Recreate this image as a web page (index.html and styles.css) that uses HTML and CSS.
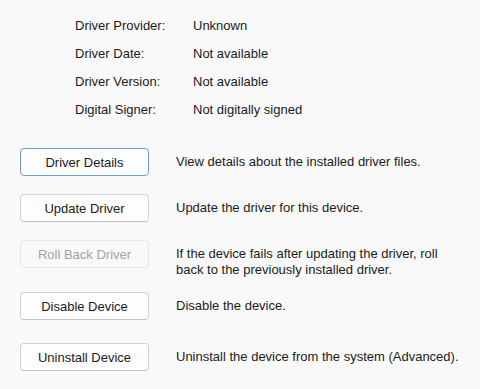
FILE: index.html
```html
<!DOCTYPE html>
<html>
<head>
    <title>Driver</title>
    <link rel="stylesheet" href="styles.css">
</head>
<body>
    <div class="container">
        <div class="info">
            <div class="etiqueta">Driver Provider:</div>
            <div class="valor">Unknown</div>
            <div class="etiqueta">Driver Date:</div>
            <div class="valor">Not available</div>
            <div class="etiqueta">Driver Version:</div>
            <div class="valor">Not available</div>
            <div class="etiqueta">Digital Signer:</div>
            <div class="valor">Not digitally signed</div>
        </div>

        <div class="acciones">
            <div class="fila">
                <button class="btn btnFoco">Driver Details</button>
                <div class="desc">View details about the installed driver files.</div>
            </div>
            <div class="fila">
                <button class="btn">Update Driver</button>
                <div class="desc">Update the driver for this device.</div>
            </div>
            <div class="fila filaDoble">
                <button class="btn" disabled>Roll Back Driver</button>
                <div class="desc">If the device fails after updating the driver, roll back to the previously installed driver.</div>
            </div>
            <div class="fila filaLarga">
                <button class="btn">Disable Device</button>
                <div class="desc">Disable the device.</div>
            </div>
            <div class="fila">
                <button class="btn">Uninstall Device</button>
                <div class="desc">Uninstall the device from the system (Advanced).</div>
            </div>
        </div>
    </div>
</body>
</html>
```

FILE: styles.css
```css
* {
    box-sizing: border-box;
}

body {
    margin: 0;
    padding: 0;
    background-color: #f9f9f9;
    font-family: "Liberation Sans", Arial, sans-serif;
    font-size: 13px;
    color: #1b1b1b;
}

.container {
    padding: 11px 0 0 20px;
}

.info {
    display: grid;
    grid-template-columns: 118px auto;
    grid-auto-rows: 28px;
    align-items: center;
    margin-left: 55px;
}

.acciones {
    margin-top: 25px;
}

.fila {
    display: flex;
    align-items: flex-start;
    margin-bottom: 18px;
}

.filaDoble {
    margin-bottom: 14px;
}

.filaLarga {
    margin-bottom: 23px;
}

.btn {
    width: 129px;
    height: 28px;
    flex-shrink: 0;
    background-color: #fdfdfd;
    border: 1px solid #d3d3d3;
    border-bottom-color: #c4c4c4;
    border-radius: 4px;
    font-family: inherit;
    font-size: 13px;
    color: #1b1b1b;
    padding: 0;
}

.btnFoco {
    border-color: #6e9fd4;
}

.btn:disabled {
    background-color: #f9f9f9;
    border-color: #e6e6e6;
    color: #a3a3a3;
}

.desc {
    width: 292px;
    margin-left: 27px;
    padding-top: 6px;
    line-height: 16px;
}
```
